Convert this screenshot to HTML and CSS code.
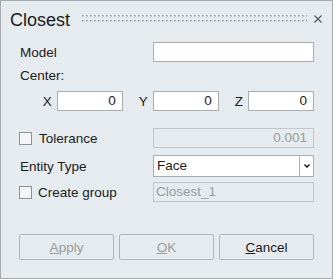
FILE: index.html
```html
<!DOCTYPE html>
<html lang="en">
<head>
  <meta charset="UTF-8">
  <title>Closest</title>
  <link rel="stylesheet" href="styles.css">
</head>
<body>
  <div class="dialog">
    <div class="titlebar">
      <span class="title">Closest</span>
      <svg class="grip" height="7">
        <defs>
          <pattern id="dots" width="4" height="5" patternUnits="userSpaceOnUse">
            <rect width="1.5" height="1.5" fill="#8f9397"/>
          </pattern>
        </defs>
        <rect width="100%" height="7" fill="url(#dots)"/>
      </svg>
      <svg class="close" width="8" height="8" viewBox="0 0 8 8">
        <path d="M0.5 0.5 L7.5 7.5 M7.5 0.5 L0.5 7.5" stroke="#505458" stroke-width="1.1"/>
      </svg>
    </div>

    <div class="form">
      <div class="row">
        <span class="label">Model</span>
        <div class="field"></div>
      </div>

      <div class="caption">Center:</div>

      <div class="coords">
        <div class="coord"><span>X</span><div class="field num">0</div></div>
        <div class="coord"><span>Y</span><div class="field num">0</div></div>
        <div class="coord"><span>Z</span><div class="field num">0</div></div>
      </div>

      <div class="row tol">
        <label class="check"><span class="box"></span>Tolerance</label>
        <div class="field num disabled">0.001</div>
      </div>

      <div class="row combo-row">
        <span class="label">Entity Type</span>
        <div class="combo">
          <span class="combo-text">Face</span>
          <span class="combo-arrow">
            <svg width="6" height="4" viewBox="0 0 6 4"><path d="M0.5 0.5 L3 3 L5.5 0.5" fill="none" stroke="#111" stroke-width="1.4"/></svg>
          </span>
        </div>
      </div>

      <div class="row grp">
        <label class="check"><span class="box"></span>Create group</label>
        <div class="field disabled">Closest_1</div>
      </div>

      <div class="buttons">
        <button class="btn" disabled><u>A</u>pply</button>
        <button class="btn" disabled><u>O</u>K</button>
        <button class="btn"><u>C</u>ancel</button>
      </div>
    </div>
  </div>
</body>
</html>
```

FILE: styles.css
```css
:root {
  --bg: #e5ebef;
  --frame: #a6aaae;
  --edge: #a9adb1;
  --edge-off: #c3c7cb;
  --text: #1b1b1b;
  --text-off: #9a9c9e;
}
*, *::before, *::after { box-sizing: border-box; }
body {
  margin: 0;
  font-family: 'Liberation Sans', Arial, sans-serif;
  font-size: 13.5px;
  color: var(--text);
}
.dialog {
  width: 333px;
  height: 279px;
  border: 1px solid var(--frame);
  background: var(--bg);
}
.titlebar {
  height: 36px;
  display: flex;
  align-items: flex-start;
  padding: 8px 10px 0 9px;
}
.title {
  font-size: 18px;
  line-height: 22px;
}
.grip {
  flex: 1;
  margin: 6px 7px 0 12px;
}
.close {
  margin-top: 6px;
}
.form {
  padding: 5px 18px 0 19px;
}
.row {
  display: grid;
  grid-template-columns: 133px 161px;
  align-items: center;
  height: 20px;
}
.label { line-height: 15px; }
.field {
  height: 20px;
  background: #fff;
  border: 1px solid var(--edge);
  line-height: 18px;
  padding: 0 2px;
}
.field.num {
  text-align: right;
  padding-right: 6px;
}
.field.disabled {
  background: transparent;
  border-color: var(--edge-off);
  color: var(--text-off);
}
.caption {
  margin-top: 6px;
  line-height: 15px;
}
.coords {
  margin-top: 8px;
  display: flex;
  justify-content: flex-end;
  gap: 16px;
}
.coord {
  display: flex;
  align-items: center;
  gap: 5px;
}
.coord .field { width: 66px; }
.tol { margin-top: 17px; }
.check {
  display: flex;
  align-items: center;
  gap: 7px;
  margin-left: -1px;
}
.box {
  width: 13px;
  height: 13px;
  border: 1px solid #8e9296;
  background: #f3f5f7;
}
.combo-row {
  margin-top: 7px;
  height: 22px;
}
.combo {
  height: 22px;
  display: flex;
  background: #fff;
  border: 1px solid var(--edge);
}
.combo-text {
  flex: 1;
  line-height: 20px;
  padding-left: 3px;
}
.combo-arrow {
  width: 14px;
  border-left: 1px solid var(--edge);
  display: flex;
  align-items: center;
  justify-content: center;
}
.grp { margin-top: 5px; }
.grp .check { gap: 6px; }
.buttons {
  margin-top: 32px;
  margin-left: -1px;
  display: flex;
  gap: 5px;
}
.btn {
  width: 95px;
  height: 26px;
  padding: 0;
  border: 1px solid #b2b6ba;
  border-radius: 2px;
  background: var(--bg);
  font-family: inherit;
  font-size: 13.5px;
  color: var(--text);
}
.btn:disabled { color: var(--text-off); }
```
